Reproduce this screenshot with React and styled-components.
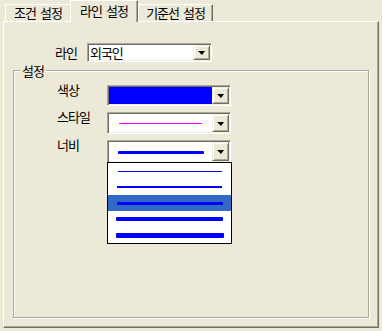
import React from 'react';
import styled, { createGlobalStyle } from 'styled-components';

const Global = createGlobalStyle`
  html, body { margin: 0; padding: 0; background: #ECE9D8; }
  body {
    font-family: "Noto Sans CJK KR", "Noto Sans", sans-serif;
    font-size: 13px;
    letter-spacing: -1px;
    word-spacing: 2px;
    color: #000;
  }
`;

const Window = styled.div`
  width: 382px;
  height: 331px;
  box-sizing: border-box;
  padding: 0 3px;
  display: flex;
  flex-direction: column;
`;

const TabRow = styled.div`
  display: flex;
  align-items: flex-end;
  height: 21px;
  padding-left: 2px;
  position: relative;
  z-index: 1;
`;

const Tab = styled.div`
  box-sizing: border-box;
  width: ${p => p.$w}px;
  height: ${p => (p.$active ? 22 : 17)}px;
  margin-bottom: ${p => (p.$active ? -1 : 0)}px;
  background: #ECE9D8;
  border-top: 1px solid #fff;
  border-left: 1px solid #fff;
  border-right: ${p => (p.$noRight ? 'none' : '1px solid #716F64')};
  box-shadow: ${p => (p.$noRight ? 'none' : 'inset -1px 0 0 #ACA899')};
  display: flex;
  justify-content: center;
  align-items: ${p => (p.$active ? 'flex-start' : 'center')};
  padding-top: ${p => (p.$active ? 3 : 0)}px;
  line-height: 14px;
  white-space: nowrap;
`;

const Panel = styled.div`
  box-sizing: border-box;
  width: 376px;
  height: 307px;
  border-top: 1px solid #fff;
  border-left: 1px solid #fff;
  border-right: 1px solid #716F64;
  border-bottom: 1px solid #716F64;
  box-shadow: inset -1px -1px 0 #ACA899;
  display: flex;
  flex-direction: column;
  padding: 21px 0 0 9px;
`;

const LineRow = styled.div`
  display: flex;
  align-items: center;
  margin-left: 42px;
  gap: 10px;
  height: 19px;
`;

const Label = styled.span`
  line-height: 14px;
  white-space: nowrap;
`;

const Combo = styled.div`
  box-sizing: border-box;
  position: relative;
  width: ${p => p.$w}px;
  height: ${p => p.$h}px;
  display: flex;
  background: #fff;
  border-top: 1px solid #ACA899;
  border-left: 1px solid #ACA899;
  border-right: 1px solid #fff;
  border-bottom: 1px solid #fff;
  box-shadow: inset 1px 1px 0 #716F64, inset -1px -1px 0 #F1EFE2;
  padding: 1px;
`;

const Field = styled.div`
  flex: 1;
  display: flex;
  align-items: ${p => (p.$text ? 'center' : 'flex-start')};
  background: ${p => p.$fill || '#fff'};
  padding-left: ${p => p.$pl || 0}px;
  line-height: 15px;
`;

const DropButton = styled.div`
  box-sizing: border-box;
  width: 17px;
  height: 100%;
  background: #ECE9D8;
  border-top: 1px solid #F1EFE2;
  border-left: 1px solid #F1EFE2;
  border-right: 1px solid #716F64;
  border-bottom: 1px solid #716F64;
  box-shadow: inset 1px 1px 0 #fff, inset -1px -1px 0 #ACA899;
  display: flex;
  align-items: center;
  justify-content: center;
`;

const Arrow = styled.div`
  width: 0;
  height: 0;
  border-left: 4px solid transparent;
  border-right: 3px solid transparent;
  border-top: 4px solid #000;
  margin-top: 1px;
`;

const Group = styled.div`
  box-sizing: border-box;
  width: 356px;
  height: 248px;
  margin-top: 8px;
  border: 1px solid #ACA899;
  box-shadow: 1px 1px 0 #fff, inset 1px 1px 0 #fff;
  display: flex;
  flex-direction: column;
`;

const Legend = styled.div`
  align-self: flex-start;
  margin: -7px 0 0 6px;
  padding: 0 2px;
  height: 13px;
  line-height: 13px;
  background: #ECE9D8;
`;

const Grid = styled.div`
  display: grid;
  grid-template-columns: 50px 124px;
  grid-template-rows: 21px 22px 23px;
  row-gap: 6px;
  margin: 8px 0 0 43px;
`;

const RowLabel = styled.span`
  line-height: 14px;
  margin-top: -2px;
  white-space: nowrap;
`;

const Stroke = styled.div`
  flex: none;
  width: ${p => p.$w}px;
  height: ${p => p.$t}px;
  background: ${p => p.$c};
  border-radius: ${p => (p.$t > 2 ? 1 : 0)}px;
  margin-top: ${p => p.$mt || 0}px;
  margin-left: ${p => p.$ml || 0}px;
`;

const DropList = styled.div`
  position: absolute;
  top: 100%;
  left: -1px;
  width: 125px;
  box-sizing: border-box;
  border: 1px solid #000;
  background: #fff;
  display: flex;
  flex-direction: column;
  z-index: 5;
`;

const ListItem = styled.div`
  height: 16px;
  display: flex;
  align-items: flex-start;
  justify-content: center;
  background: ${p => (p.$sel ? '#316AC5' : '#fff')};
`;

const widths = [1, 2, 3, 4, 5];

export default function App() {
  return (
    <>
      <Global />
      <Window>
        <TabRow>
          <Tab $w={65} $noRight>조건 설정</Tab>
          <Tab $w={68} $active>라인 설정</Tab>
          <Tab $w={75}>기준선 설정</Tab>
        </TabRow>
        <Panel>
          <LineRow>
            <Label>라인</Label>
            <Combo $w={125} $h={19}>
              <Field $text $pl={1}>외국인</Field>
              <DropButton><Arrow /></DropButton>
            </Combo>
          </LineRow>
          <Group>
            <Legend>설정</Legend>
            <Grid>
              <RowLabel>색상</RowLabel>
              <Combo $w={124} $h={21}>
                <Field $fill="#0000FF" />
                <DropButton><Arrow /></DropButton>
              </Combo>
              <RowLabel>스타일</RowLabel>
              <Combo $w={124} $h={22}>
                <Field>
                  <Stroke $w={83} $t={1} $c="#FF00FF" $ml={10} $mt={9} />
                </Field>
                <DropButton><Arrow /></DropButton>
              </Combo>
              <RowLabel>너비</RowLabel>
              <Combo $w={124} $h={23}>
                <Field>
                  <Stroke $w={86} $t={3} $c="#0000FF" $ml={9} $mt={9} />
                </Field>
                <DropButton><Arrow /></DropButton>
                <DropList>
                  {widths.map(t => (
                    <ListItem key={t} $sel={t === 3}>
                      <Stroke
                        $w={103 + t}
                        $t={t}
                        $c="#0000FF"
                        $mt={Math.floor((17 - t) / 2)}
                      />
                    </ListItem>
                  ))}
                </DropList>
              </Combo>
            </Grid>
          </Group>
        </Panel>
      </Window>
    </>
  );
}
